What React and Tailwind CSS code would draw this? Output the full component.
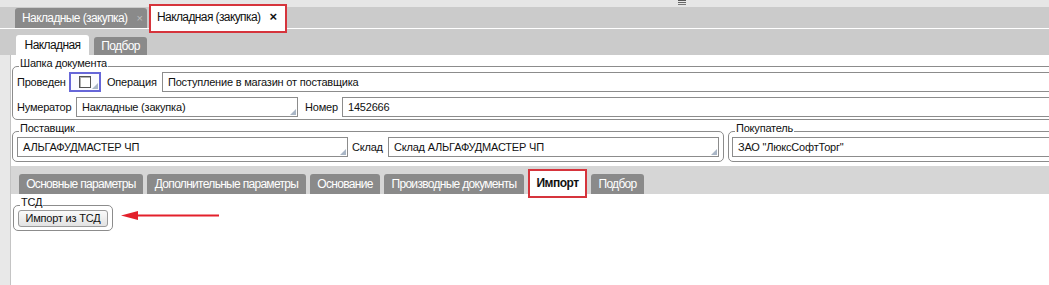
import React from 'react';

// small resize corner drawn in the bottom-right of combo fields
function Corner() {
  return (
    <span className="absolute right-[1px] bottom-[1px] w-0 h-0 border-l-[6px] border-l-transparent border-b-[6px] border-b-[#a9b6c6]" />
  );
}

function Field({ value, className = '', corner = false }) {
  return (
    <div className={`relative h-[20px] border border-[#8c8c8c] bg-white pl-[5px] flex items-center text-[11px] text-[#111] ${className}`}>
      <span className="whitespace-nowrap">{value}</span>
      {corner && <Corner />}
    </div>
  );
}

function Group({ title, className = '', children }) {
  return (
    <div className={`relative border border-[#8c8c8c] rounded-[5px] ${className}`}>
      <span className="absolute -top-[10px] left-[6px] bg-white px-[1px] text-[11px] leading-[12px] text-[#111]">
        {title}
      </span>
      {children}
    </div>
  );
}

function Tab({ label, w, active = false }) {
  if (active) {
    return (
      <div className={`relative z-10 self-end h-[29px] -mb-[4px] ${w} border-2 border-[#d6343c] bg-white flex items-center justify-center pb-[2px] text-[12px] tracking-[-0.5px] font-bold text-[#111]`}>
        {label}
      </div>
    );
  }
  return (
    <div className={`h-[20px] ${w} rounded-t-[3px] bg-[#8a8a8a] flex items-center justify-center text-[12px] tracking-[-0.7px] text-white whitespace-nowrap`}>
      {label}
    </div>
  );
}

export default function App() {
  const lowerTabs = [
    { label: 'Основные параметры', w: 'w-[124px]' },
    { label: 'Дополнительные параметры', w: 'w-[159px]' },
    { label: 'Основание', w: 'w-[70px]' },
    { label: 'Производные документы', w: 'w-[140px]' },
    { label: 'Импорт', w: 'w-[59px]', active: true },
    { label: 'Подбор', w: 'w-[53px]' },
  ];

  return (
    <div className="w-[1049px] h-[285px] overflow-hidden bg-[#e6e6e6] flex flex-col font-['Liberation_Sans',Arial,sans-serif] tracking-[-0.2px] text-[#111]">
      {/* top strip */}
      <div className="h-[7px] pl-[678px] flex items-start">
        <svg width="8" height="6" viewBox="0 0 8 6">
          <rect x="0" y="0" width="8" height="1" fill="#555" />
          <rect x="0" y="2" width="8" height="1" fill="#666" />
          <rect x="0" y="4" width="8" height="1" fill="#777" />
        </svg>
      </div>

      {/* document tabs */}
      <div className="h-[22px] bg-[#cbcbcb] border-b border-white flex items-end pl-[15px] gap-[2px]">
        <div className="h-[20px] w-[132px] rounded-t-[3px] bg-[#8a8a8a] flex items-center pl-[7px] text-[12px] tracking-[-0.6px] text-white whitespace-nowrap">
          Накладные (закупка)
          <span className="ml-[9px] text-[11px] text-[#bdbdbd]">×</span>
        </div>
        <div className="relative z-10 self-end h-[29px] -mb-[5px] w-[138px] border-2 border-[#d6343c] bg-white flex items-center pl-[6px] pb-[4px] text-[12px] tracking-[-0.6px] text-[#111] whitespace-nowrap">
          Накладная (закупка)
          <span className="ml-[9px] text-[13px] font-bold leading-none">×</span>
        </div>
      </div>

      {/* inner tabs */}
      <div className="h-[26px] bg-[#cbcbcb] flex items-end pl-[16px] gap-[5px]">
        <div className="h-[20px] w-[73px] rounded-t-[3px] bg-white flex items-center justify-center text-[12px] tracking-[-0.6px] text-[#111]">
          Накладная
        </div>
        <div className="h-[18px] w-[53px] rounded-t-[3px] bg-[#8a8a8a] flex items-center justify-center text-[12px] tracking-[-0.6px] text-white">
          Подбор
        </div>
      </div>

      <div className="flex-1 flex">
        <div className="w-[11px] bg-[#e8e8e8] border-r border-[#c4c4c4]" />
        <div className="flex-1 bg-white overflow-hidden flex flex-col">
          {/* header group */}
          <Group title="Шапка документа" className="mt-[11px] ml-[1px] w-[1050px] pt-[5px] pb-[2px] pl-[4px]">
            <div className="flex items-center text-[11px]">
              <span className="w-[52px]">Проведен</span>
              <div className="relative w-[32px] h-[20px] border-2 border-[#6767d8] bg-[#fbfbff] flex items-center pl-[8px]">
                <div className="w-[12px] h-[12px] border border-[#555] bg-white shadow-[inset_1px_1px_0_#b0b0b0]" />
                <Corner />
              </div>
              <span className="ml-[6px] w-[55px]">Операция</span>
              <Field value="Поступление в магазин от поставщика" className="flex-1" />
            </div>
            <div className="flex items-center text-[11px] mt-[5px]">
              <span className="w-[59px]">Нумератор</span>
              <Field value="Накладные (закупка)" className="w-[222px]" corner />
              <span className="ml-[7px] w-[37px]">Номер</span>
              <Field value="1452666" className="flex-1" />
            </div>
          </Group>

          {/* supplier / buyer */}
          <div className="mt-[11px] ml-[1px] w-[1050px] flex">
            <Group title="Поставщик" className="w-[712px] pt-[5px] pb-[4px] pl-[4px]">
              <div className="flex items-center text-[11px]">
                <Field value="АЛЬГАФУДМАСТЕР ЧП" className="w-[331px]" corner />
                <span className="ml-[4px] w-[36px]">Склад</span>
                <Field value="Склад АЛЬГАФУДМАСТЕР ЧП" className="w-[331px]" corner />
              </div>
            </Group>
            <Group title="Покупатель" className="ml-[4px] flex-1 pt-[5px] pb-[4px] pl-[3px]">
              <Field value='ЗАО "ЛюксСофтТорг"' />
            </Group>
          </div>

          {/* lower tabs */}
          <div className="mt-[4px] h-[28px] bg-[#d6d6d6] flex items-end pl-[8px] gap-[4px]">
            {lowerTabs.map((t) => (
              <Tab key={t.label} label={t.label} w={t.w} active={t.active} />
            ))}
          </div>

          {/* import group */}
          <div className="mt-[11px] ml-[2px] flex items-start">
            <Group title="ТСД" className="w-[100px] pt-[4px] pb-[3px] pl-[4px]">
              <button className="w-[90px] h-[17px] rounded-[3px] border border-[#9a9a9a] bg-gradient-to-b from-[#fafafa] to-[#e2e2e2] text-[11px] text-[#111] flex items-center justify-center">
                Импорт из ТСД
              </button>
            </Group>
            <svg className="ml-[8px] mt-[3px]" width="100" height="14" viewBox="0 0 100 14">
              <polygon points="0,7.5 17,3 17,12" fill="#e3202b" />
              <line x1="15" y1="7.5" x2="98" y2="7.5" stroke="#e3202b" strokeWidth="2" />
            </svg>
          </div>
        </div>
      </div>
    </div>
  );
}
